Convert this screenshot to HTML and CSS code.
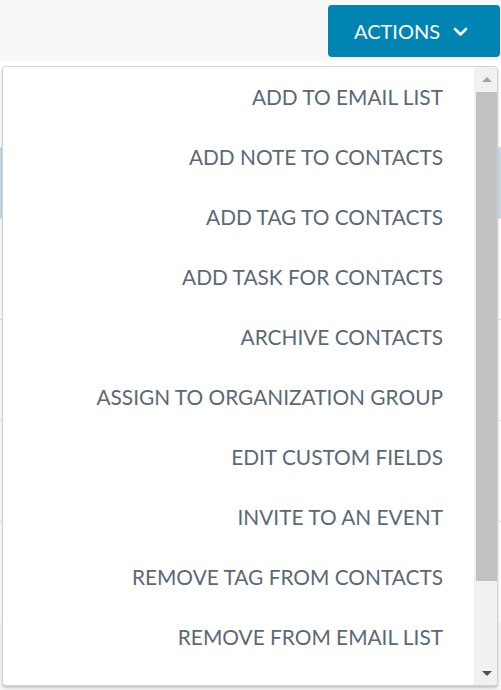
FILE: index.html
```html
<!DOCTYPE html>
<html>
<head>
<meta charset="utf-8">
<link rel="stylesheet" href="styles.css">
</head>
<body>
<div class="toolbar">
  <button class="btn">ACTIONS
    <svg class="chev" width="15" height="10" viewBox="0 0 15 10"><polyline points="2,2 7.5,7.5 13,2" fill="none" stroke="#fff" stroke-width="2.6" stroke-linecap="round" stroke-linejoin="round"/></svg>
  </button>
</div>
<div class="bg">
  <div class="bg-row"></div>
  <div class="bg-row sel"></div>
  <div class="bg-row"></div>
  <div class="bg-row"></div>
  <div class="bg-row"></div>
  <div class="bg-row"></div>
</div>
<div class="dropdown">
  <ul class="list">
    <li class="item">ADD TO EMAIL LIST</li>
    <li class="item">ADD NOTE TO CONTACTS</li>
    <li class="item">ADD TAG TO CONTACTS</li>
    <li class="item">ADD TASK FOR CONTACTS</li>
    <li class="item">ARCHIVE CONTACTS</li>
    <li class="item">ASSIGN TO ORGANIZATION GROUP</li>
    <li class="item">EDIT CUSTOM FIELDS</li>
    <li class="item">INVITE TO AN EVENT</li>
    <li class="item">REMOVE TAG FROM CONTACTS</li>
    <li class="item">REMOVE FROM EMAIL LIST</li>
  </ul>
  <div class="scrollbar">
    <div class="arrow-box"><span class="arrow up"></span></div>
    <div class="thumb"></div>
    <div class="rest"></div>
    <div class="arrow-box bottom"><span class="arrow down"></span></div>
  </div>
</div>
</body>
</html>
```
FILE: styles.css
```css
html, body {
  margin: 0;
  padding: 0;
  background: #f8f8f8;
  font-family: Lato, "Open Sans", sans-serif;
  overflow: hidden;
}
.toolbar {
  display: flex;
  justify-content: flex-end;
  padding: 5px 1px 0 0;
  height: 61px;
  box-sizing: border-box;
}
.btn {
  width: 172px;
  height: 52px;
  border: none;
  border-radius: 4px;
  background: #0084b4;
  color: #fff;
  font-family: Lato, sans-serif;
  font-size: 20px;
  display: flex;
  align-items: center;
  justify-content: flex-start;
  padding: 0 0 0 26px;
  gap: 13px;
  box-sizing: border-box;
}
.chev { display: block; margin-top: 1px; }
.bg {
  background: #fff;
  margin-top: 0;
}
.bg-row {
  height: 100px;
  border-top: 1px solid #e2e2e2;
}
.bg-row:first-child { height: 56px; border-top: none; }
.bg-row.sel { height: 70px; background: #c4dfea; border-top: 1px solid #e2e2e2; margin-top: 30px; }
.dropdown {
  position: absolute;
  top: 66px;
  left: 2px;
  width: 496px;
  height: 620px;
  box-sizing: border-box;
  border: 1px solid #d2d2d2;
  border-radius: 4px;
  background: #fff;
  box-shadow: 0 2px 3px rgba(0,0,0,0.22);
  display: flex;
  overflow: hidden;
}
.list {
  list-style: none;
  margin: 0;
  padding: 0;
  flex: 1;
  overflow: hidden;
}
.item {
  height: 60px;
  box-sizing: border-box;
  display: flex;
  align-items: center;
  justify-content: flex-end;
  padding: 0 31px 2px 0;
  font-size: 20.85px;
  color: #5a6976;
  white-space: nowrap;
}
.scrollbar {
  width: 23px;
  background: #f1f1f1;
  display: flex;
  flex-direction: column;
}
.arrow-box {
  height: 25px;
  display: flex;
  align-items: center;
  justify-content: center;
  padding-left: 2px;
}
.arrow-box.bottom { height: 24px; }
.arrow {
  width: 0;
  height: 0;
  border-left: 5px solid transparent;
  border-right: 5px solid transparent;
}
.arrow.up { border-bottom: 5px solid #a3a3a3; }
.arrow.down { border-top: 5px solid #505050; }
.thumb {
  height: 489px;
  margin-left: 2px;
  background: #c1c1c1;
}
.rest { flex: 1; }
```
